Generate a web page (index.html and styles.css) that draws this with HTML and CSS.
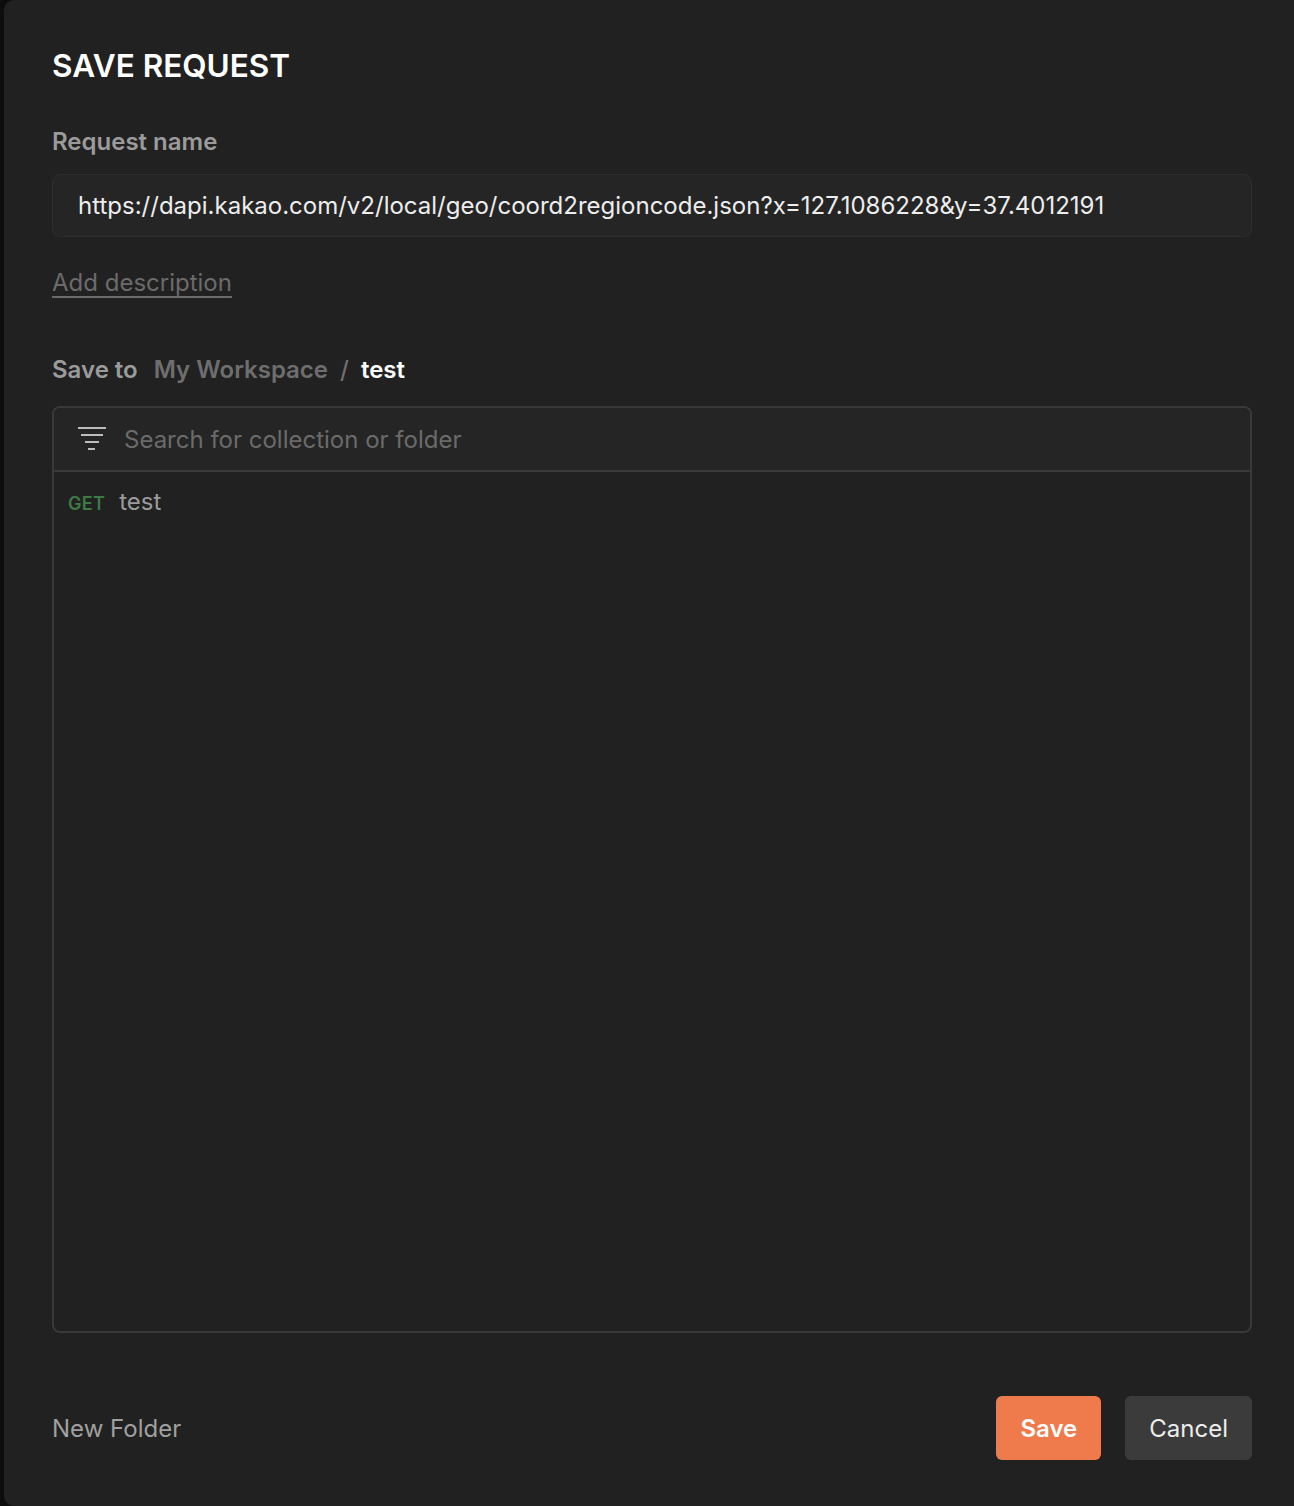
FILE: index.html
```html
<!DOCTYPE html>
<html>
<head>
<meta charset="utf-8">
<link rel="stylesheet" href="styles.css">
</head>
<body>
<div class="modal">
  <h1 class="title">SAVE REQUEST</h1>
  <div class="label">Request name</div>
  <div class="input">https://dapi.kakao.com/v2/local/geo/coord2regioncode.json?x=127.1086228&amp;y=37.4012191</div>
  <div class="desc"><span class="desc-link">Add description</span></div>
  <div class="saveto">
    <span class="saveto-label">Save to</span>
    <span class="crumb">My Workspace</span>
    <span class="sep">/</span>
    <span class="crumb-current">test</span>
  </div>
  <div class="tree">
    <div class="tree-search">
      <svg class="filter-icon" width="30" height="26" viewBox="0 0 30 26">
        <g stroke="#bdbdbd" stroke-width="2" fill="none">
          <line x1="1" y1="2" x2="29" y2="2"/>
          <line x1="4" y1="9" x2="26" y2="9"/>
          <line x1="8" y1="16" x2="22" y2="16"/>
          <line x1="11" y1="23" x2="18" y2="23"/>
        </g>
      </svg>
      <span class="placeholder">Search for collection or folder</span>
    </div>
    <div class="tree-body">
      <div class="row">
        <span class="method">GET</span>
        <span class="row-name">test</span>
      </div>
    </div>
  </div>
  <div class="footer">
    <span class="new-folder">New Folder</span>
    <div class="actions">
      <button class="btn btn-save">Save</button>
      <button class="btn btn-cancel">Cancel</button>
    </div>
  </div>
</div>
</body>
</html>
```
FILE: styles.css
```css
html, body {
  margin: 0;
  padding: 0;
  background: #0d0d0d;
  overflow: hidden;
}
body {
  font-family: Inter, "Noto Sans", sans-serif;
  width: 1294px;
  height: 1506px;
}
.modal {
  margin-left: 4px;
  width: 1310px;
  height: 1506px;
  box-sizing: border-box;
  background: #212121;
  border-radius: 10px;
  padding: 44px 0 0 48px;
  display: flex;
  flex-direction: column;
}
.modal > * {
  width: 1200px;
}
.title {
  margin: 0;
  font-size: 31.5px;
  font-weight: 600;
  color: #ffffff;
  line-height: 44px;
}
.label {
  margin-top: 39px;
  font-size: 24px;
  font-weight: 600;
  color: #9b9b9b;
  line-height: 30px;
}
.input {
  margin-top: 17px;
  height: 63px;
  box-sizing: border-box;
  border: 1.5px solid #2e2e2e;
  background: #252525;
  border-radius: 8px;
  padding: 0 25px;
  display: flex;
  align-items: center;
  font-size: 24px;
  color: #ededed;
}
.desc {
  margin-top: 30px;
  font-size: 24px;
  line-height: 32px;
  height: 32px;
}
.desc-link {
  color: #6b6b6b;
  text-decoration: underline;
  text-decoration-color: #6b6b6b;
  text-underline-offset: 5px;
  text-decoration-thickness: 2px;
}
.saveto {
  margin-top: 55px;
  display: flex;
  align-items: baseline;
  font-size: 24px;
  font-weight: 600;
  line-height: 32px;
}
.saveto-label { color: #9b9b9b; margin-right: 16px; }
.crumb { color: #6e6e6e; }
.sep { color: #6e6e6e; margin: 0 12px; font-weight: 500; }
.crumb-current { color: #ffffff; }
.tree {
  margin-top: 20px;
  height: 927px;
  box-sizing: border-box;
  border: 2px solid #393939;
  border-radius: 8px;
  display: flex;
  flex-direction: column;
  overflow: hidden;
}
.tree-search {
  height: 64px;
  flex: none;
  box-sizing: border-box;
  background: #252525;
  border-bottom: 2px solid #393939;
  display: flex;
  align-items: center;
  padding-left: 23px;
}
.filter-icon {
  margin-right: 17px;
  flex: none;
}
.placeholder {
  font-size: 24px;
  color: #6b6b6b;
}
.tree-body {
  flex: 1;
  padding: 14px 0 0 14px;
}
.row {
  display: flex;
  align-items: baseline;
}
.method {
  font-size: 18px;
  font-weight: 600;
  color: #3e7a43;
  letter-spacing: 0.3px;
  margin-right: 14px;
}
.row-name {
  font-size: 24px;
  color: #9b9b9b;
  line-height: 32px;
}
.footer {
  margin-top: 63px;
  display: flex;
  align-items: center;
  justify-content: space-between;
}
.new-folder {
  font-size: 24px;
  color: #a0a0a0;
}
.actions {
  display: flex;
  gap: 24px;
}
.btn {
  height: 64px;
  border: none;
  border-radius: 6px;
  font-family: Inter, "Noto Sans", sans-serif;
  font-size: 24px;
  padding: 0 24px;
}
.btn-save {
  background: #ef7a4c;
  color: #ffffff;
  font-weight: 600;
}
.btn-cancel {
  background: #3b3b3b;
  color: #ededed;
  font-weight: 400;
}
```
